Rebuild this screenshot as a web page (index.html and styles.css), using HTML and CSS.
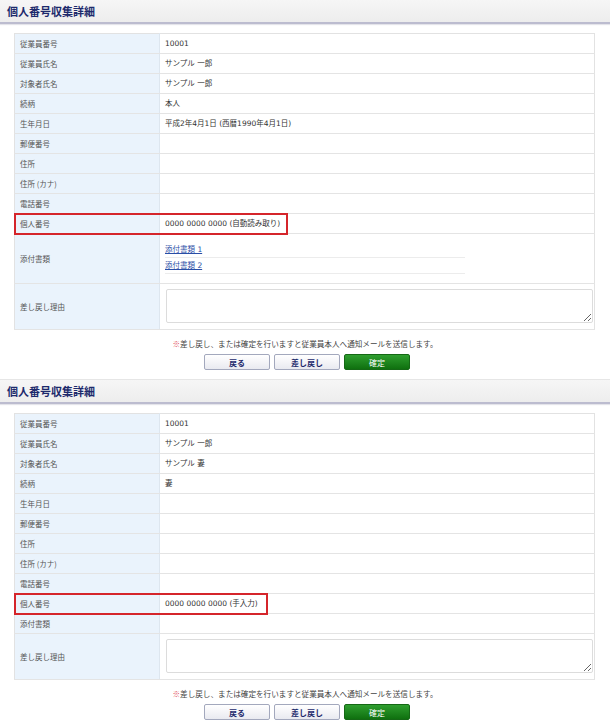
FILE: index.html
```html
<!DOCTYPE html>
<html lang="ja">
<head>
<meta charset="utf-8">
<title>個人番号収集詳細</title>
<link rel="stylesheet" href="styles.css">
</head>
<body>
<section class="panel">
  <h2 class="panel-title">個人番号収集詳細</h2>
  <table class="detail">
    <colgroup><col class="col-label"><col></colgroup>
    <tbody>
      <tr><th>従業員番号</th><td>10001</td></tr>
      <tr><th>従業員氏名</th><td>サンプル 一郎</td></tr>
      <tr><th>対象者氏名</th><td>サンプル 一郎</td></tr>
      <tr><th>続柄</th><td>本人</td></tr>
      <tr><th>生年月日</th><td>平成2年4月1日 (西暦1990年4月1日)</td></tr>
      <tr><th>郵便番号</th><td></td></tr>
      <tr><th>住所</th><td></td></tr>
      <tr><th>住所 (カナ)</th><td></td></tr>
      <tr><th>電話番号</th><td></td></tr>
      <tr><th class="mark">個人番号<span class="highlight wide"></span></th><td>0000 0000 0000 (自動読み取り)</td></tr>
      <tr><th>添付書類</th><td class="files">
        <ul class="file-list">
          <li><a href="#">添付書類 1</a></li>
          <li><a href="#">添付書類 2</a></li>
        </ul>
      </td></tr>
      <tr><th>差し戻し理由</th><td class="reason"><textarea></textarea></td></tr>
    </tbody>
  </table>
  <p class="note"><span class="asterisk">※</span>差し戻し、または確定を行いますと従業員本人へ通知メールを送信します。</p>
  <div class="actions">
    <button class="btn">戻る</button>
    <button class="btn">差し戻し</button>
    <button class="btn btn-ok">確定</button>
  </div>
</section>

<section class="panel panel-second">
  <h2 class="panel-title">個人番号収集詳細</h2>
  <table class="detail">
    <colgroup><col class="col-label"><col></colgroup>
    <tbody>
      <tr><th>従業員番号</th><td>10001</td></tr>
      <tr><th>従業員氏名</th><td>サンプル 一郎</td></tr>
      <tr><th>対象者氏名</th><td>サンプル 妻</td></tr>
      <tr><th>続柄</th><td>妻</td></tr>
      <tr><th>生年月日</th><td></td></tr>
      <tr><th>郵便番号</th><td></td></tr>
      <tr><th>住所</th><td></td></tr>
      <tr><th>住所 (カナ)</th><td></td></tr>
      <tr><th>電話番号</th><td></td></tr>
      <tr><th class="mark">個人番号<span class="highlight narrow"></span></th><td>0000 0000 0000 (手入力)</td></tr>
      <tr><th>添付書類</th><td></td></tr>
      <tr><th>差し戻し理由</th><td class="reason"><textarea></textarea></td></tr>
    </tbody>
  </table>
  <p class="note"><span class="asterisk">※</span>差し戻し、または確定を行いますと従業員本人へ通知メールを送信します。</p>
  <div class="actions">
    <button class="btn">戻る</button>
    <button class="btn">差し戻し</button>
    <button class="btn btn-ok">確定</button>
  </div>
</section>
</body>
</html>
```

FILE: styles.css
```css
html, body {
  margin: 0;
  padding: 0;
  background: #ffffff;
}
body {
  width: 610px;
  font-family: "DejaVu Sans", "Noto Sans CJK JP", sans-serif;
  font-size: 7.5px;
  color: #333333;
}
.panel-second {
  margin-top: 9px;
}
.panel-title {
  margin: 0;
  height: 22px;
  line-height: 22px;
  padding-left: 7px;
  font-family: "Noto Sans CJK JP", sans-serif;
  font-size: 11px;
  font-weight: bold;
  color: #1d2a6c;
  background: linear-gradient(#f6f6f6, #ededed);
  border-top: 1px solid #e6e6e6;
  border-bottom: 2px solid #bcbccf;
  box-shadow: 0 1px 1px #e4e4ea;
}
.panel:first-child .panel-title {
  border-top: 0;
  height: 22px;
}
.detail {
  margin: 9px 0 0 14px;
  width: 581px;
  table-layout: fixed;
  border-collapse: collapse;
  border: 1px solid #e2e2e2;
}
.col-label {
  width: 145px;
}
.detail th,
.detail td {
  padding: 0 5px;
  line-height: 19px;
  height: 19px;
  text-align: left;
  vertical-align: middle;
  font-weight: normal;
  border-bottom: 1px solid #e4e4e4;
}
.detail th {
  background: #eaf3fc;
  color: #555555;
  border-right: 1px solid #dde6ef;
  font-family: "Noto Sans CJK JP", sans-serif;
}
.detail td {
  color: #333333;
}
.mark {
  position: relative;
}
.highlight {
  position: absolute;
  top: -1px;
  left: -1px;
  height: 22px;
  box-sizing: border-box;
  border: 2px solid #d5252b;
}
.highlight.wide {
  width: 274px;
}
.highlight.narrow {
  width: 254px;
}
.detail td.files {
  padding: 8px 5px 9px 5px;
}
.file-list {
  list-style: none;
  margin: 0;
  padding: 0;
  width: 300px;
}
.file-list li {
  height: 16px;
  line-height: 16px;
  border-bottom: 1px solid #ececec;
  box-sizing: border-box;
}
.file-list a {
  color: #2a4ea6;
  text-decoration: underline;
}
.detail td.reason {
  padding: 5px 3px 6px 6px;
}
.reason textarea {
  display: block;
  box-sizing: border-box;
  width: 427px;
  height: 34px;
  margin: 0;
  border: 1px solid #dcdcdc;
  border-radius: 2px;
  background: #ffffff;
  outline: none;
}
.note {
  margin: 8px 0 0 0;
  line-height: 12px;
  text-align: center;
  font-family: "Noto Sans CJK JP", sans-serif;
  font-size: 7.6px;
  color: #444444;
}
.asterisk {
  color: #e0505a;
}
.actions {
  margin-top: 4px;
  display: flex;
  justify-content: center;
  gap: 4px;
  padding-left: 4px;
}
.btn {
  width: 66px;
  height: 16px;
  box-sizing: border-box;
  padding: 0;
  border: 1px solid #a3a8bd;
  border-radius: 2px;
  background: linear-gradient(#ffffff, #e9eaf0);
  font-family: "Noto Sans CJK JP", sans-serif;
  font-size: 8px;
  font-weight: bold;
  color: #1d2a6c;
}
.btn-ok {
  border-color: #156815;
  background: linear-gradient(#2f9e2f, #0f700f);
  color: #ffffff;
  font-weight: normal;
}
```
